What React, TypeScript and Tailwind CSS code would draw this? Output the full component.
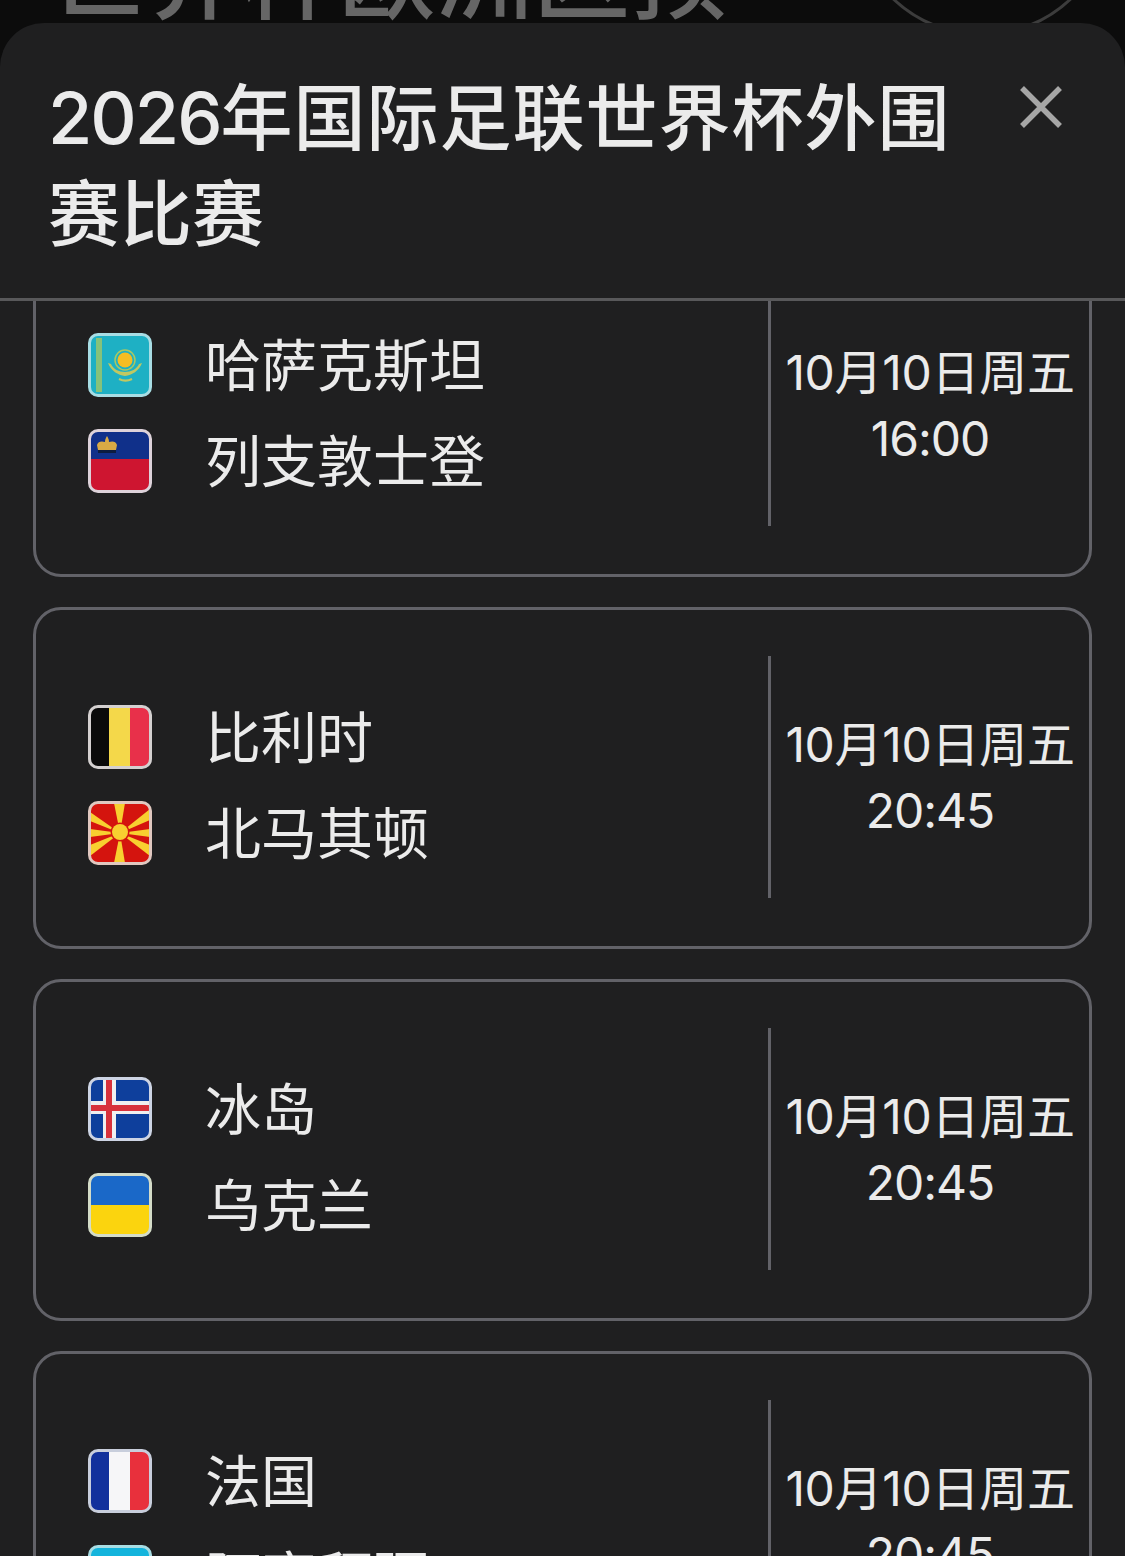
const FONT = "font-['Inter','Noto_Sans_CJK_SC',sans-serif]";

function FlagFrame({ children, edge }: { children: React.ReactNode; edge: string }) {
  return (
    <svg width="64" height="64" viewBox="0 0 64 64" className="shrink-0">
      <defs>
        <clipPath id="flag-clip">
          <rect x="2" y="2" width="60" height="60" rx="8" />
        </clipPath>
      </defs>
      <g clipPath="url(#flag-clip)">{children}</g>
      <rect x="1.5" y="1.5" width="61" height="61" rx="8.5" fill="none" stroke={edge} strokeWidth="3" />
    </svg>
  );
}

function Kazakhstan() {
  return (
    <FlagFrame edge="#a8dde4">
      <rect width="64" height="64" fill="#1eb0c4" />
      <rect x="8" y="5" width="6" height="54" fill="#86c27a" />
      <circle cx="37" cy="27" r="7.5" fill="#f6bd22" />
      <circle cx="37" cy="27" r="10" fill="none" stroke="#a8c864" strokeWidth="1.5" />
      <path d="M20 30 C23 38 30 42 37 43 C44 42 51 38 54 30 L51 31 C49 36 43 39 37 39 C31 39 25 36 23 31 Z" fill="#c0c862" />
      <path d="M31 46 C35 48 40 48 44 46" fill="none" stroke="#c0c862" strokeWidth="2" />
    </FlagFrame>
  );
}

function Liechtenstein() {
  return (
    <FlagFrame edge="#ddd2da">
      <rect width="64" height="31" fill="#10308a" />
      <rect y="30" width="64" height="34" fill="#ce1530" />
      <path d="M10 21 L9 16 C10 12 14 12 17 13 C17 10 18 9 19 7 C20 9 21 10 21 13 C24 12 28 12 29 16 L28 21 Z" fill="#d8aa45" />
      <rect x="10" y="21" width="18" height="3" fill="#0c1c40" />
    </FlagFrame>
  );
}

function Belgium() {
  return (
    <FlagFrame edge="#d4d0d0">
      <rect width="21" height="64" fill="#0a0a0a" />
      <rect x="21" width="21" height="64" fill="#f4d84a" />
      <rect x="42" width="22" height="64" fill="#e8304a" />
    </FlagFrame>
  );
}

function Macedonia() {
  return (
    <FlagFrame edge="#e0c8c0">
      <rect width="64" height="64" fill="#d4140e" />
      <g fill="#f8d030">
        <path d="M26 2 L37 2 L32 32 Z" />
        <path d="M26 62 L37 62 L32 32 Z" />
        <path d="M2 28 L2 36 L32 32 Z" />
        <path d="M62 28 L62 36 L32 32 Z" />
        <path d="M2 11 L2 20 L32 32 Z" />
        <path d="M62 8 L62 19 L32 32 Z" />
        <path d="M2 44 L2 55 L32 32 Z" />
        <path d="M62 44 L62 55 L32 32 Z" />
      </g>
      <circle cx="32" cy="31" r="9.5" fill="#d4140e" />
      <circle cx="32" cy="31" r="8" fill="#f8d030" />
    </FlagFrame>
  );
}

function Iceland() {
  return (
    <FlagFrame edge="#cdd4e4">
      <rect width="64" height="64" fill="#0e3f9c" />
      <rect x="15" width="13" height="64" fill="#f0f0f0" />
      <rect y="24" width="64" height="13" fill="#f0f0f0" />
      <rect x="18" width="6" height="64" fill="#d8323c" />
      <rect y="28" width="64" height="6" fill="#d8323c" />
    </FlagFrame>
  );
}

function Ukraine() {
  return (
    <FlagFrame edge="#d4dcc8">
      <rect width="64" height="32" fill="#1a68c8" />
      <rect y="32" width="64" height="32" fill="#fbd40e" />
    </FlagFrame>
  );
}

function France() {
  return (
    <FlagFrame edge="#c8cedc">
      <rect width="21" height="64" fill="#12319c" />
      <rect x="21" width="21" height="64" fill="#f6f6f8" />
      <rect x="42" width="22" height="64" fill="#e8303c" />
    </FlagFrame>
  );
}

function Azerbaijan() {
  return (
    <FlagFrame edge="#a8dde4">
      <rect width="64" height="22" fill="#14b4dc" />
      <rect y="22" width="64" height="21" fill="#e0283c" />
      <rect y="43" width="64" height="21" fill="#2ca858" />
    </FlagFrame>
  );
}

const matches = [
  { home: "哈萨克斯坦", away: "列支敦士登", time: "16:00", homeFlag: <Kazakhstan />, awayFlag: <Liechtenstein /> },
  { home: "比利时", away: "北马其顿", time: "20:45", homeFlag: <Belgium />, awayFlag: <Macedonia /> },
  { home: "冰岛", away: "乌克兰", time: "20:45", homeFlag: <Iceland />, awayFlag: <Ukraine /> },
  { home: "法国", away: "阿塞拜疆", time: "20:45", homeFlag: <France />, awayFlag: <Azerbaijan /> },
];

function MatchCard({ match }: { match: (typeof matches)[number] }) {
  return (
    <li className="flex h-[342px] shrink-0 rounded-[28px] border-[3px] border-[#626268] pb-[48px] pt-[46px]">
      <div className="flex flex-1 flex-col justify-center gap-8 pl-[52px] pt-[16px]">
        <div className="flex h-16 items-center gap-[53px]">
          {match.homeFlag}
          <span className="mt-[2px] text-[56px] leading-[64px]">{match.home}</span>
        </div>
        <div className="flex h-16 items-center gap-[53px]">
          {match.awayFlag}
          <span className="mt-[2px] text-[56px] leading-[64px]">{match.away}</span>
        </div>
      </div>
      <div className="flex w-[321px] flex-col items-center justify-center border-l-[3px] border-[#626268] pt-[2px] text-[48px] leading-[66px]">
        <span className="tracking-[-0.3px]">10月10日周五</span>
        <span className="tracking-[-1px]">{match.time}</span>
      </div>
    </li>
  );
}

export default function App() {
  return (
    <div className={`flex h-[1556px] w-[1125px] flex-col overflow-hidden bg-[#0c0c0c] text-[#ebebeb] ${FONT}`}>
      <div className="flex h-[23px] shrink-0 items-end justify-between pl-[48px] pr-[13px]">
        <span className="mb-[-9px] whitespace-nowrap text-[97px] font-medium leading-[112px] text-[#666666]">
          世界杯欧洲区预
        </span>
        <div className="mb-[-13px] size-[260px] shrink-0 rounded-full border-[3px] border-[#3c3c3c]" />
      </div>

      <div className="flex min-h-0 flex-1 flex-col rounded-t-[44px] bg-[#1f1f20]">
        <header className="flex h-[278px] shrink-0 justify-between border-b-[3px] border-[#58585a] pl-[48px] pr-[62px] pt-[47px]">
          <h2 className="w-[920px] text-[72px] font-medium leading-[96px]">
            <span className="tracking-[-2px]">2026</span>
            <span className="tracking-[1px]">年国际足联世界杯外围</span>
            <span>赛比赛</span>
          </h2>
          <svg width="44" height="44" viewBox="0 0 44 44" className="mt-[15px] text-[#a6a6a6]">
            <path d="M3 3 L41 41 M41 3 L3 41" fill="none" stroke="currentColor" strokeWidth="5.5" />
          </svg>
        </header>

        <div className="min-h-0 flex-1 overflow-hidden">
          <ul className="mt-[-66px] flex flex-col gap-[30px] px-[33px]">
            {matches.map((match) => (
              <MatchCard key={match.home} match={match} />
            ))}
          </ul>
        </div>
      </div>
    </div>
  );
}
